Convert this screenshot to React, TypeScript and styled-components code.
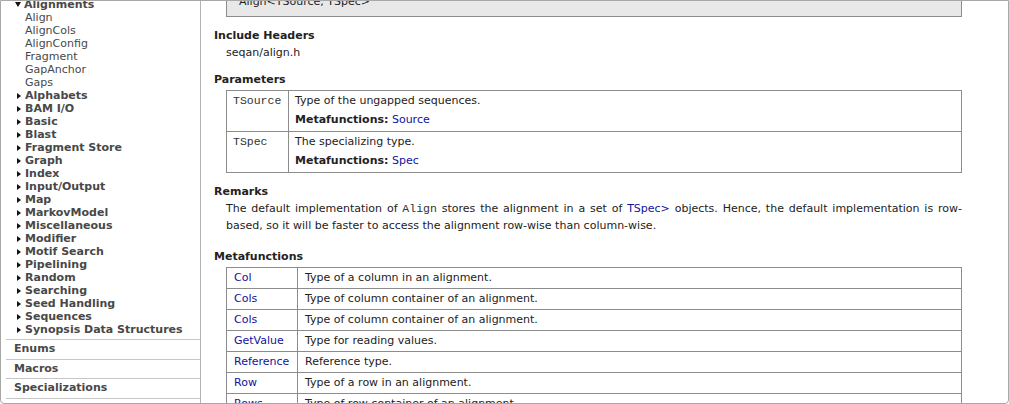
import React from "react";
import styled, { createGlobalStyle } from "styled-components";

const GlobalStyle = createGlobalStyle`
  html, body {
    margin: 0;
    padding: 0;
    background: #fff;
    overflow: hidden;
  }
  body {
    font-family: "DejaVu Sans", Verdana, sans-serif;
    font-size: 11px;
    color: #222;
  }
`;

const Frame = styled.div`
  box-sizing: border-box;
  width: 1009px;
  height: 404px;
  border: 1px solid #a8a8a8;
  border-radius: 0 0 4px 4px;
  display: flex;
  overflow: hidden;
`;

const Sidebar = styled.nav`
  width: 199px;
  flex-shrink: 0;
  border-right: 1px solid #b4b4b4;
  color: #484848;
`;

const Tree = styled.ul`
  list-style: none;
  margin: -3px 0 0;
  padding: 0 0 3px;
`;

const TreeItem = styled.li<{ $indent: number; $bold?: boolean }>`
  display: flex;
  align-items: center;
  height: 13px;
  line-height: 13px;
  padding-left: ${(p) => p.$indent}px;
  font-weight: ${(p) => (p.$bold ? 700 : 400)};
  white-space: nowrap;
`;

const Arrow = styled.span<{ $open?: boolean }>`
  width: 0;
  height: 0;
  border-style: solid;
  margin-right: ${(p) => (p.$open ? 3 : 4)}px;
  ${(p) =>
    p.$open
      ? "border-width: 5px 3.5px 0 3.5px; border-color: #111 transparent transparent transparent;"
      : "border-width: 3.5px 0 3.5px 4px; border-color: transparent transparent transparent #111;"}
`;

const Section = styled.div`
  margin-left: 5px;
  padding-left: 8px;
  border-top: 1px solid #c6c6c6;
  line-height: 18.5px;
  font-weight: bold;
`;

const Main = styled.main`
  flex: 1;
  min-width: 0;
  padding: 0 46px 0 13px;
`;

const CodeBox = styled.div`
  margin: -13px 0 0 12px;
  padding: 6px 12px 7px;
  line-height: 14px;
  background: #e8e8e8;
  border: 1px solid #8c8c8c;
`;

const Heading = styled.h2<{ $gap: number }>`
  margin: ${(p) => p.$gap}px 0 0;
  font-size: 11px;
  line-height: 17px;
  font-weight: bold;
  color: #222;
`;

const Body = styled.div`
  margin-left: 12px;
  line-height: 17px;
`;

const Paragraph = styled.p`
  margin: 0 0 0 12px;
  line-height: 17px;
  text-align: justify;
`;

const Mono = styled.code`
  font-family: "Liberation Mono", "Courier New", monospace;
  font-size: 11.5px;
  color: #333;
`;

const Link = styled.a`
  color: #12129c;
  text-decoration: none;
`;

const DocTable = styled.table`
  margin: 2px 0 0 12px;
  width: 736px;
  border-collapse: collapse;
  table-layout: fixed;
`;

const Cell = styled.td<{ $w?: number; $tall?: boolean }>`
  border: 1px solid #8c8c8c;
  padding: ${(p) => (p.$tall ? "2px 7px 4px 6px" : "3px 7px")};
  line-height: ${(p) => (p.$tall ? 15 : 14)}px;
  vertical-align: top;
  ${(p) => (p.$w ? `width: ${p.$w}px;` : "")}
`;

const MetaLine = styled.div`
  margin-top: 4px;
`;

const Bold = styled.b`
  font-weight: bold;
`;

const alignChildren = ["Align", "AlignCols", "AlignConfig", "Fragment", "GapAnchor", "Gaps"];

const categories = [
  "Alphabets",
  "BAM I/O",
  "Basic",
  "Blast",
  "Fragment Store",
  "Graph",
  "Index",
  "Input/Output",
  "Map",
  "MarkovModel",
  "Miscellaneous",
  "Modifier",
  "Motif Search",
  "Pipelining",
  "Random",
  "Searching",
  "Seed Handling",
  "Sequences",
  "Synopsis Data Structures",
];

const sections = ["Enums", "Macros", "Specializations", "Shortcuts"];

const params = [
  { name: "TSource", text: "Type of the ungapped sequences.", meta: "Source" },
  { name: "TSpec", text: "The specializing type.", meta: "Spec" },
];

const metafunctions = [
  ["Col", "Type of a column in an alignment."],
  ["Cols", "Type of column container of an alignment."],
  ["Cols", "Type of column container of an alignment."],
  ["GetValue", "Type for reading values."],
  ["Reference", "Reference type."],
  ["Row", "Type of a row in an alignment."],
  ["Rows", "Type of row container of an alignment."],
  ["Size", "Type of an object that represents a size."],
];

export default function App() {
  return (
    <>
      <GlobalStyle />
      <Frame>
        <Sidebar>
          <Tree>
            <TreeItem $indent={14} $bold>
              <Arrow $open />
              Alignments
            </TreeItem>
            {alignChildren.map((c) => (
              <TreeItem key={c} $indent={24}>
                {c}
              </TreeItem>
            ))}
            {categories.map((c) => (
              <TreeItem key={c} $indent={16} $bold>
                <Arrow />
                {c}
              </TreeItem>
            ))}
          </Tree>
          {sections.map((s) => (
            <Section key={s}>{s}</Section>
          ))}
        </Sidebar>
        <Main>
          <CodeBox>Align&lt;TSource, TSpec&gt;</CodeBox>

          <Heading $gap={10}>Include Headers</Heading>
          <Body>seqan/align.h</Body>

          <Heading $gap={10}>Parameters</Heading>
          <DocTable>
            <tbody>
              {params.map((p) => (
                <tr key={p.name}>
                  <Cell $w={48} $tall>
                    <Mono>{p.name}</Mono>
                  </Cell>
                  <Cell $tall>
                    <div>{p.text}</div>
                    <MetaLine>
                      <Bold>Metafunctions:</Bold> <Link href="#">{p.meta}</Link>
                    </MetaLine>
                  </Cell>
                </tr>
              ))}
            </tbody>
          </DocTable>

          <Heading $gap={10}>Remarks</Heading>
          <Paragraph>
            The default implementation of <Mono>Align</Mono> stores the alignment in a set of{" "}
            <Link href="#">TSpec&gt;</Link> objects. Hence, the default implementation is row-based, so it
            will be faster to access the alignment row-wise than column-wise.
          </Paragraph>

          <Heading $gap={14}>Metafunctions</Heading>
          <DocTable>
            <tbody>
              {metafunctions.map(([name, text], i) => (
                <tr key={i}>
                  <Cell $w={56}>
                    <Link href="#">{name}</Link>
                  </Cell>
                  <Cell>{text}</Cell>
                </tr>
              ))}
            </tbody>
          </DocTable>
        </Main>
      </Frame>
    </>
  );
}
